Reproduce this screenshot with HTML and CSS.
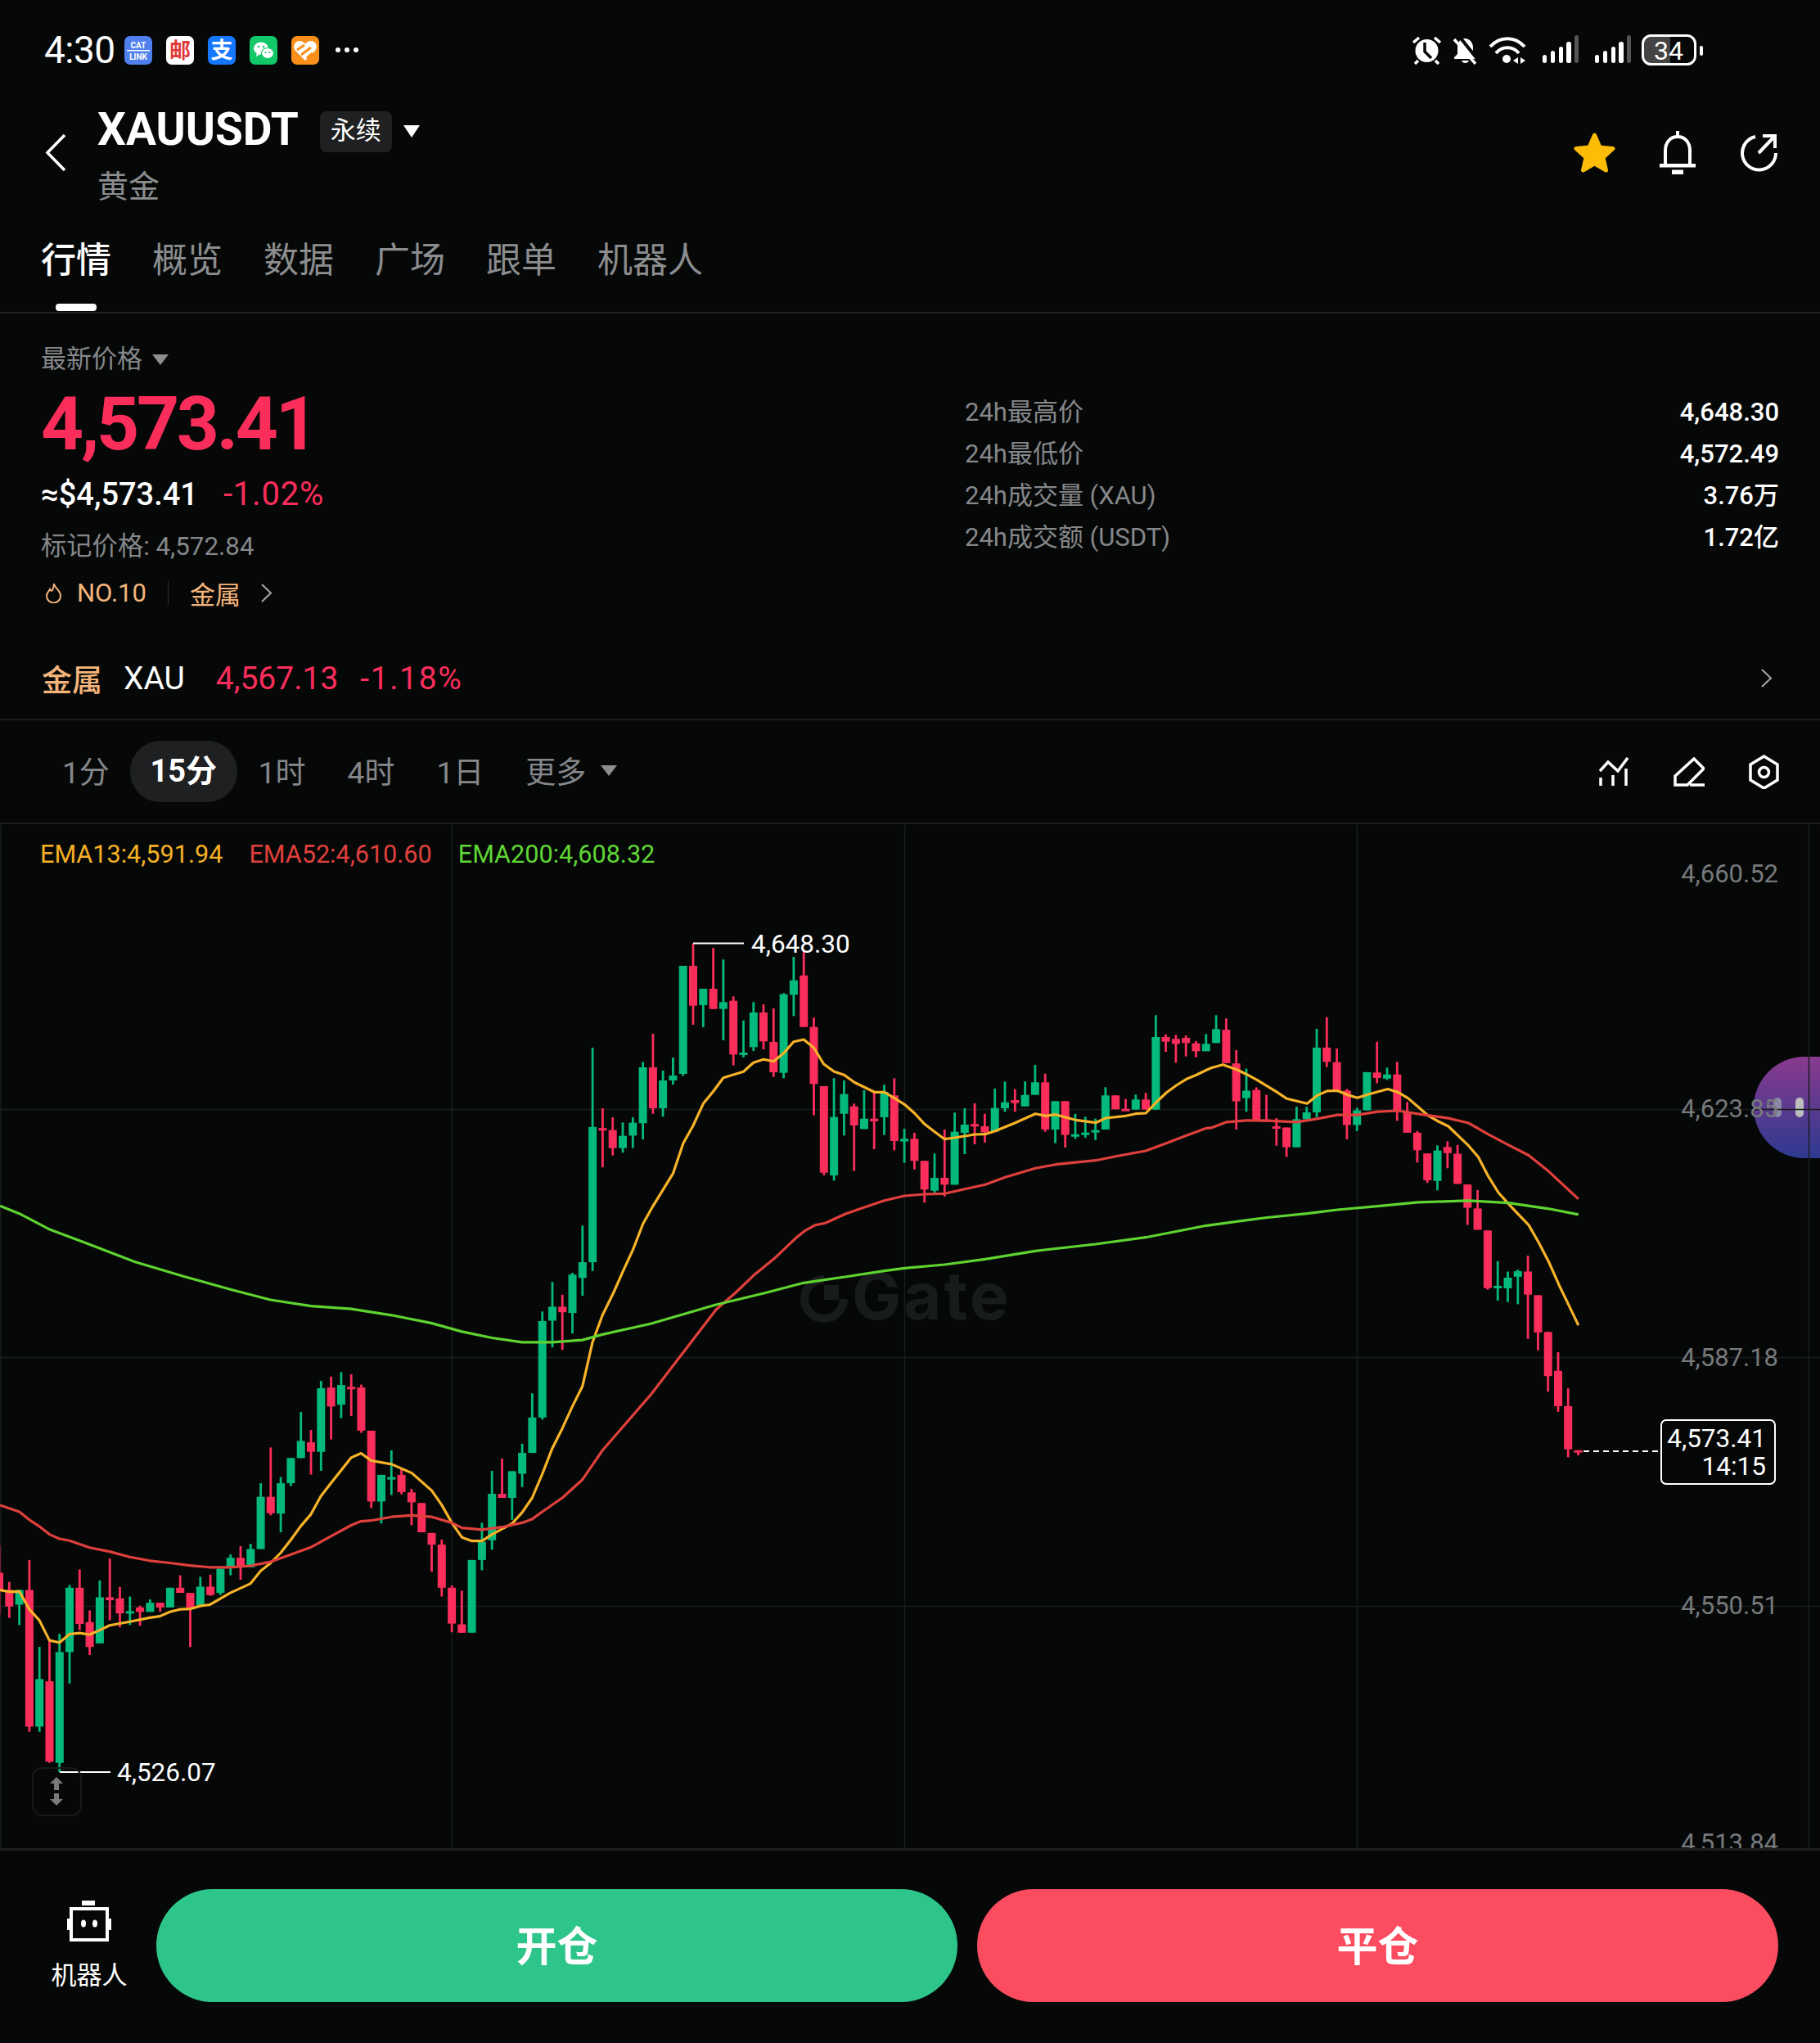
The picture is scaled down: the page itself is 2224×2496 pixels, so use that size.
FILE: index.html
```html
<!DOCTYPE html>
<html>
<head>
    <meta charset="utf-8">
    <title>XAUUSDT</title>
    <link rel="stylesheet" href="styles.css">
</head>
<body>
<div class="app">
    <div class="status-bar">
        <span class="clock">4:30</span>
        <div class="app-icons">
            <svg class="app-icon" viewBox="0 0 34 35"><rect width="34" height="35" rx="7" fill="#5080ee"/><text x="17" y="15" class="cat-text">CAT</text><rect x="3" y="17" width="28" height="1.5" fill="#fff"/><text x="17" y="29" class="cat-text">LINK</text></svg>
            <svg class="app-icon" viewBox="0 0 34 35"><rect width="34" height="35" rx="7" fill="#fff"/><text x="17" y="27" class="mail-text">邮</text></svg>
            <svg class="app-icon" viewBox="0 0 34 35"><rect width="34" height="35" rx="7" fill="#1677ff"/><text x="17" y="27" class="pay-text">支</text></svg>
            <svg class="app-icon" viewBox="0 0 34 35"><rect width="34" height="35" rx="7" fill="#12c868"/><ellipse cx="14" cy="15" rx="9" ry="7.5" fill="#fff"/><path d="M9 20l-1 5 5-3z" fill="#fff"/><ellipse cx="22" cy="21" rx="7.5" ry="6.5" fill="#fff" stroke="#12c868" stroke-width="1.2"/><circle cx="11" cy="13" r="1.3" fill="#12c868"/><circle cx="17" cy="13" r="1.3" fill="#12c868"/><circle cx="19.5" cy="20" r="1.1" fill="#12c868"/><circle cx="24.5" cy="20" r="1.1" fill="#12c868"/></svg>
            <svg class="app-icon" viewBox="0 0 34 35"><rect width="34" height="35" rx="7" fill="#fb8f1b"/><path d="M17 30L5 18C1 13 4 6 10 6c3 0 5 1 7 4 2-3 4-4 7-4 6 0 9 7 5 12z" fill="#fff"/><path d="M7 17l9-6M12 23l12-9M19 27l7-6" stroke="#fb8f1b" stroke-width="3" fill="none"/></svg>
            <svg class="more-dots" viewBox="0 0 28 8"><circle cx="3" cy="4" r="3"/><circle cx="14" cy="4" r="3"/><circle cx="25" cy="4" r="3"/></svg>
        </div>
        <div class="status-right">
            <svg class="st-alarm" viewBox="0 0 37 36"><circle cx="18.5" cy="19" r="14" fill="#fff"/><path d="M16 9v11l8 8" stroke="#060808" stroke-width="3.5" fill="none"/><path d="M2 9l7-6M35 9l-7-6M8 31l-4 4M29 31l4 4" stroke="#fff" stroke-width="3.5" fill="none"/></svg>
            <svg class="st-mute" viewBox="0 0 31 36"><path d="M15 4C9 4 6 9 6 15v8l-4 4v2h27v-2l-4-4v-8C25 9 21 4 15 4z" fill="#fff"/><path d="M11 31h9c-1 4-8 4-9 0z" fill="#fff"/><path d="M7 0l24 30" stroke="#060808" stroke-width="4"/><path d="M2 5l26 30" stroke="#fff" stroke-width="3.5"/></svg>
            <svg class="st-wifi" viewBox="0 0 46 36"><path d="M2 14C14 1 32 1 44 14M9 22C16 13 30 13 37 22" stroke="#fff" stroke-width="4" fill="none"/><circle cx="22" cy="29" r="5" fill="#fff"/><path d="M36 27v8l-6-4zM39 27v8l6-4z" fill="#fff"/></svg>
            <svg class="st-signal" viewBox="0 0 44 36"><rect x="0" y="24" width="5" height="10" rx="2.5"/><rect x="10" y="19" width="5" height="15" rx="2.5"/><rect x="20" y="14" width="5" height="20" rx="2.5"/><rect x="29" y="8" width="6" height="26" rx="2.5"/><rect class="dim" x="39" y="0" width="5" height="34" rx="2.5"/></svg>
            <svg class="st-signal" viewBox="0 0 44 36"><rect x="0" y="24" width="5" height="10" rx="2.5"/><rect x="10" y="19" width="5" height="15" rx="2.5"/><rect x="20" y="14" width="5" height="20" rx="2.5"/><rect x="29" y="8" width="6" height="26" rx="2.5"/><rect class="dim" x="39" y="0" width="5" height="34" rx="2.5"/></svg>
            <svg class="st-battery" viewBox="0 0 76 38"><path d="M11 3h24v32H11a8 8 0 0 1-8-8V11a8 8 0 0 1 8-8z" fill="#444"/><rect x="1.5" y="1.5" width="64" height="35" rx="10" fill="none" stroke="#fff" stroke-width="3"/><rect x="71" y="14" width="4" height="12" rx="2" fill="#fff"/><text x="33" y="31" class="batt-text">34</text></svg>
        </div>
    </div>

    <div class="topbar">
        <svg class="back-icon" viewBox="0 0 26 47"><path d="M24 2L3 23.5 24 45" fill="none" stroke="#fff" stroke-width="3.5"/></svg>
        <div class="title-block">
            <div class="title-row">
                <span class="symbol">XAUUSDT</span>
                <span class="badge">永续</span>
                <span class="caret caret-title"></span>
            </div>
            <div class="subtitle">黄金</div>
        </div>
        <div class="top-actions">
            <svg class="ic-star" viewBox="0 0 53 50"><path d="M26.5 4l6.5 15 16 1.5-12 11 3.500 15.500-14-8.200-14 8.200 3.500-15.500-12-11 16-1.500z" fill="#fcbc07" stroke="#fcbc07" stroke-width="5" stroke-linejoin="round"/></svg>
            <svg class="ic-bell" viewBox="0 0 44 53"><path d="M22 0v7M7 41V24C7 14 13 7 22 7s15 7 15 17v17" fill="none" stroke="#fff" stroke-width="4"/><rect y="40" width="44" height="4.500" fill="#fff"/><rect x="15" y="47.500" width="14" height="5.500" fill="#fff"/></svg>
            <svg class="ic-share" viewBox="0 0 47 47"><path d="M20 4a20.500 20.500 0 1 0 25 20" fill="none" stroke="#fff" stroke-width="4"/><path d="M24 24L43 4M29 3h15v15" fill="none" stroke="#fff" stroke-width="4"/></svg>
        </div>
    </div>

    <div class="tabs">
        <span class="tab active">行情</span>
        <span class="tab">概览</span>
        <span class="tab">数据</span>
        <span class="tab">广场</span>
        <span class="tab">跟单</span>
        <span class="tab">机器人</span>
    </div>

    <div class="overview">
        <div class="price-col">
            <div class="price-label">最新价格 <span class="caret caret-grey"></span></div>
            <div class="price-main">4,573.41</div>
            <div class="price-sub"><span>≈$4,573.41</span><span class="red">-1.02%</span></div>
            <div class="price-mark">标记价格: 4,572.84</div>
            <div class="price-tags">
                <svg class="ic-flame" viewBox="0 0 21 25"><path d="M11 1c0 5 8 8 8 15a8.500 8.500 0 0 1-17 0c0-4 3-6 4-8 1 2 2 2 3 1 1-3 2-5 2-8z" fill="none" stroke="#f5b57a" stroke-width="2"/></svg>
                <span class="tag-no">NO.10</span>
                <span class="tag-sep"></span>
                <span>金属</span>
                <svg class="ic-more" viewBox="0 0 15 23"><path d="M2 1l11 10.500L2 22" fill="none" stroke="#a8a8a8" stroke-width="2"/></svg>
            </div>
        </div>
        <div class="stats">
            <div class="stat-row"><span>24h最高价</span><b>4,648.30</b></div>
            <div class="stat-row"><span>24h最低价</span><b>4,572.49</b></div>
            <div class="stat-row"><span>24h成交量 (XAU)</span><b>3.76万</b></div>
            <div class="stat-row"><span>24h成交额 (USDT)</span><b>1.72亿</b></div>
        </div>
    </div>

    <div class="index-row">
        <span class="index-name">金属</span>
        <span class="index-code">XAU</span>
        <span class="red index-price">4,567.13</span>
        <span class="red index-change">-1.18%</span>
        <svg class="ic-more index-more" viewBox="0 0 15 23"><path d="M2 1l11 10.500L2 22" fill="none" stroke="#a8a8a8" stroke-width="2"/></svg>
    </div>

    <div class="periods">
        <span class="period first">1分</span>
        <span class="period active">15分</span>
        <span class="period">1时</span>
        <span class="period">4时</span>
        <span class="period">1日</span>
        <span class="period more">更多 <span class="caret caret-more"></span></span>
        <div class="chart-tools">
            <svg class="ic-ind" viewBox="0 0 37 36"><path d="M1 17l10-11 12 11L35 1M2 25v10M17 22v13M33 14v21" fill="none" stroke="#fff" stroke-width="3.500"/></svg>
            <svg class="ic-pen" viewBox="0 0 38 36"><path d="M2 34V23L25 2l12 12-20 20zM20 34h18" fill="none" stroke="#fff" stroke-width="3.500"/></svg>
            <svg class="ic-hex" viewBox="0 0 37 42"><path d="M18.500 2L35 12v19L18.500 41 2 31V12z" fill="none" stroke="#fff" stroke-width="3.500"/><circle cx="18.500" cy="21.500" r="6" fill="none" stroke="#fff" stroke-width="3.500"/></svg>
        </div>
    </div>

    <div class="chart">
        <div class="float-ball"><i></i><i></i></div>
        <svg class="chart-svg" viewBox="0 1007 2224 1251">
            <path class="grid" d="M1 1006v1252M552.500 1006v1252M1105.500 1006v1252M1658.500 1006v1252M2210.500 1006v1252M0 1355.500h2224M0 1658.500h2224M0 1962.500h2224"/>
            <g class="watermark">
                <path d="M1007 1563a24 24 0 1 0 24 24" fill="none" stroke="#181b1c" stroke-width="10"/>
                <rect x="1007" y="1570" width="18" height="18" fill="#181b1c"/>
                <text x="1041" y="1612">Gate</text>
            </g>
            <g id="candles"></g>
            <g id="lines"></g>
            <text class="axis" x="2173" y="1078">4,660.52</text>
            <text class="axis" x="2173" y="1365">4,623.85</text>
            <text class="axis" x="2173" y="1669">4,587.18</text>
            <text class="axis" x="2173" y="1972">4,550.51</text>
            <text class="axis" x="2173" y="2262">4,513.84</text>
            <path class="mark-line" d="M847 1152.500h62M73 2165h62"/>
            <text class="mark" x="918" y="1164">4,648.30</text>
            <text class="mark" x="143" y="2176">4,526.07</text>
            <path class="last-line" d="M1935 1773h94"/>
            <rect class="last-box" x="2030" y="1735" width="139" height="78" rx="6"/>
            <text class="last-text" x="2158" y="1768">4,573.41</text>
            <text class="last-text" x="2158" y="1802">14:15</text>
            <rect class="scroll-btn" x="40" y="2160" width="59" height="58" rx="12"/>
            <path class="scroll-arrow" d="M69 2171l-8 8h5v8h6v-8h5zM69 2206l-8-8h5v-7h6v7h5z"/>
        </svg>
        <div class="legend">
            <span class="ema13">EMA13:4,591.94</span>
            <span class="ema52">EMA52:4,610.60</span>
            <span class="ema200">EMA200:4,608.32</span>
        </div>
    </div>

    <div class="bottom-bar">
        <div class="bot-link">
            <svg class="ic-robot" viewBox="0 0 54 50"><rect x="18" y="0" width="16" height="6" fill="#fff"/><rect x="5" y="10" width="44" height="38" fill="none" stroke="#fff" stroke-width="4"/><rect x="0" y="22" width="4" height="14" fill="#fff"/><rect x="50" y="22" width="4" height="14" fill="#fff"/><ellipse cx="20" cy="28" rx="3" ry="4.500" fill="#fff"/><ellipse cx="34" cy="28" rx="3" ry="4.500" fill="#fff"/></svg>
            <span>机器人</span>
        </div>
        <button class="trade open">开仓</button>
        <button class="trade close">平仓</button>
    </div>
</div>
<script src="chart.js"></script>
</body>
</html>
```

FILE: styles.css
```css
* {
    box-sizing: border-box;
}
body {
    margin: 0;
    background-color: #060808;
    color: #fff;
    font-family: Roboto, "Noto Sans CJK SC", sans-serif;
}
svg {
    display: block;
    flex: none;
}
.app {
    width: 2224px;
    height: 2496px;
    display: flex;
    flex-direction: column;
    overflow: hidden;
}
.red {
    color: #fb2d5b;
}

/* status bar */
.status-bar {
    height: 122px;
    padding: 0 142px 0 54px;
    display: flex;
    align-items: center;
}
.clock {
    font-size: 46px;
    letter-spacing: -0.5px;
    width: 98px;
}
.app-icons {
    display: flex;
    align-items: center;
    gap: 17px;
}
.app-icon {
    width: 34px;
    height: 35px;
}
.more-dots {
    width: 28px;
    height: 8px;
    fill: #fff;
    margin-left: 3px;
}
.cat-text {
    font-size: 10px;
    font-weight: 700;
    fill: #fff;
    text-anchor: middle;
}
.mail-text {
    font-size: 26px;
    font-weight: 700;
    fill: #e03a3a;
    text-anchor: middle;
}
.pay-text {
    font-size: 27px;
    font-weight: 700;
    fill: #fff;
    text-anchor: middle;
}
.status-right {
    margin-left: auto;
    display: flex;
    align-items: center;
    gap: 13px;
}
.st-alarm {
    width: 37px;
    height: 36px;
}
.st-mute {
    width: 31px;
    height: 36px;
}
.st-wifi {
    width: 46px;
    height: 36px;
}
.st-signal {
    width: 44px;
    height: 36px;
    fill: #fff;
    margin-left: 7px;
}
.st-signal .dim {
    fill: #555;
}
.st-battery {
    width: 76px;
    height: 38px;
}
.batt-text {
    font-size: 32px;
    fill: #fff;
    text-anchor: middle;
}

/* header */
.topbar {
    height: 134px;
    padding: 0 52px 0 55px;
    display: flex;
    align-items: center;
}
.back-icon {
    width: 26px;
    height: 47px;
    margin: 0 38px 6px 0;
}
.title-block {
    padding-top: 4px;
}
.title-row {
    display: flex;
    align-items: center;
    height: 50px;
}
.symbol {
    font-size: 55px;
    font-weight: 700;
    margin: -6px 26px 0 0;
}
.badge {
    width: 88px;
    height: 50px;
    line-height: 48px;
    text-align: center;
    border-radius: 8px;
    background-color: #1e2021;
    font-size: 31px;
    margin-right: 14px;
}
.caret {
    display: inline-block;
    width: 0;
    height: 0;
    border-style: solid;
    border-color: #fff transparent transparent;
}
.caret-title {
    border-width: 15px 10.5px 0;
}
.subtitle {
    margin-top: 23px;
    font-size: 38px;
    line-height: 38px;
    color: #8b8d8f;
}
.top-actions {
    margin: 0 0 6px auto;
    display: flex;
    align-items: center;
    gap: 53px;
}
.ic-star {
    width: 53px;
    height: 50px;
}
.ic-bell {
    width: 44px;
    height: 53px;
}
.ic-share {
    width: 47px;
    height: 47px;
}

/* tabs */
.tabs {
    height: 127px;
    padding: 37px 0 0 50px;
    display: flex;
    gap: 50px;
    border-bottom: 2px solid #1c1e1f;
}
.tab {
    position: relative;
    font-size: 43px;
    line-height: 50px;
    height: 50px;
    color: #8b8d8f;
}
.tab.active {
    color: #fff;
    font-weight: 500;
}
.tab.active::after {
    content: "";
    position: absolute;
    left: 18px;
    top: 78px;
    width: 50px;
    height: 9px;
    border-radius: 4px;
    background-color: #fff;
}

/* price overview */
.overview {
    height: 390px;
    display: flex;
}
.price-col {
    width: 1179px;
    padding: 36px 0 0 50px;
}
.price-label {
    height: 40px;
    line-height: 40px;
    font-size: 31px;
    color: #85878a;
    display: flex;
    align-items: center;
}
.caret-grey {
    border-width: 13px 10px 0;
    border-top-color: #8b8d8f;
    margin-left: 12px;
}
.price-main {
    height: 110px;
    line-height: 112px;
    margin-top: 3px;
    font-size: 91px;
    font-weight: 700;
    letter-spacing: -3.3px;
    color: #fb2d5b;
}
.price-sub {
    height: 56px;
    line-height: 64px;
    font-size: 38px;
    font-weight: 500;
    display: flex;
    gap: 31px;
}
.price-sub .red {
    font-size: 40px;
    font-weight: 400;
    letter-spacing: 0.8px;
}
.price-mark {
    height: 40px;
    line-height: 40px;
    margin-top: 20px;
    font-size: 31.3px;
    color: #85878a;
}
.price-tags {
    height: 40px;
    margin-top: 16px;
    display: flex;
    align-items: center;
    font-size: 31px;
    color: #f5b57a;
}
.ic-flame {
    width: 21px;
    height: 25px;
    margin: 0 18px 0 5px;
}
.tag-sep {
    width: 1px;
    height: 30px;
    background-color: #2a2c2d;
    margin: 0 26px;
}
.ic-more {
    width: 15px;
    height: 23px;
    margin-left: 24px;
}
.stats {
    flex: 1;
    padding: 95px 50px 0 0;
}
.stat-row {
    height: 51px;
    line-height: 51px;
    display: flex;
    justify-content: space-between;
    font-size: 31px;
    color: #85878a;
}
.stat-row b {
    font-weight: 500;
    color: #fff;
}

/* index row */
.index-row {
    height: 107px;
    padding: 6px 58px 0 51px;
    display: flex;
    align-items: center;
    font-size: 39px;
    border-bottom: 2px solid #1c1e1f;
}
.index-name {
    font-size: 37px;
    font-weight: 500;
    color: #f5b57a;
    margin-right: 26px;
}
.index-price {
    margin: 0 27px 0 38px;
}
.index-change {
    letter-spacing: 1.6px;
}
.index-more {
    margin-left: auto;
}

/* period selector */
.periods {
    height: 127px;
    padding: 0 50px 0 0;
    display: flex;
    align-items: center;
    font-size: 37px;
    color: #85878a;
    border-bottom: 2px solid #1c1e1f;
}
.period {
    margin-left: 51px;
    padding-bottom: 3px;
    white-space: nowrap;
}
.period.first {
    margin-left: 76px;
}
.period.active {
    width: 131px;
    height: 75px;
    margin-left: 25px;
    margin-right: -25px;
    padding-bottom: 0;
    line-height: 75px;
    text-align: center;
    border-radius: 37px;
    background-color: #1e2021;
    color: #fff;
    font-size: 38px;
    font-weight: 700;
}
.period.more {
    display: flex;
    align-items: center;
}
.caret-more {
    border-width: 13px 10px 0;
    border-top-color: #8b8d8f;
    margin-left: 18px;
}
.chart-tools {
    margin-left: auto;
    display: flex;
    align-items: center;
    gap: 54px;
}
.ic-ind {
    width: 37px;
    height: 36px;
}
.ic-pen {
    width: 38px;
    height: 36px;
}
.ic-hex {
    width: 37px;
    height: 42px;
}

/* chart */
.chart {
    position: relative;
    flex: 1;
    overflow: hidden;
}
.chart-svg {
    position: absolute;
    left: 0;
    top: 0;
    width: 2224px;
    height: 1251px;
}
.grid {
    fill: none;
    stroke: #1a1c1d;
    stroke-width: 1.500;
}
.watermark text {
    font-family: Inter, Roboto, sans-serif;
    font-size: 80px;
    font-weight: 700;
    fill: #181b1c;
    letter-spacing: 3px;
}
.axis {
    font-size: 31px;
    fill: #77797b;
    text-anchor: end;
}
.mark {
    font-size: 31.5px;
    fill: #fff;
}
.mark-line {
    fill: none;
    stroke: #fff;
    stroke-width: 2;
}
.last-line {
    fill: none;
    stroke: #fff;
    stroke-width: 2;
    stroke-dasharray: 7 5;
}
.last-box {
    fill: #060808;
    stroke: #fff;
    stroke-width: 2;
}
.last-text {
    font-size: 31.5px;
    fill: #fff;
    text-anchor: end;
}
.scroll-btn {
    fill: none;
    stroke: #17191a;
    stroke-width: 2;
}
.scroll-arrow {
    fill: #77797b;
}
.legend {
    position: absolute;
    left: 49px;
    top: 19px;
    display: flex;
    gap: 32px;
    font-size: 30.6px;
    line-height: 36px;
}
.ema13 {
    color: #f5b025;
}
.ema52 {
    color: #e0403c;
}
.ema200 {
    color: #5fd635;
}
.float-ball {
    position: absolute;
    right: 0;
    top: 284px;
    width: 81px;
    height: 124px;
    border-radius: 62px 0 0 62px;
    background: linear-gradient(#8a3a8e, #2d3a90);
    display: flex;
    align-items: center;
    gap: 17px;
    padding: 0 0 0 24px;
}
.float-ball i {
    width: 10px;
    height: 24px;
    border-radius: 5px;
    background-color: #bdbdbd;
}
.float-ball i:first-child {
    background-color: #8d88a6;
}

/* bottom actions */
.bottom-bar {
    height: 238px;
    padding: 47px 51px 0 62px;
    display: flex;
    border-top: 3px solid #1c1e1f;
}
.bot-link {
    width: 94px;
    margin-right: 35px;
    padding-top: 14px;
    display: flex;
    flex-direction: column;
    align-items: center;
    font-size: 31px;
    white-space: nowrap;
}
.ic-robot {
    width: 54px;
    height: 50px;
    margin-bottom: 16px;
}
.trade {
    height: 138px;
    width: 979px;
    padding: 0 0 6px;
    border: none;
    border-radius: 69px;
    color: #fff;
    font-family: inherit;
    font-size: 50px;
    font-weight: 700;
}
.trade.open {
    background-color: #2dc58a;
    margin-right: 24px;
}
.trade.close {
    background-color: #fc4c60;
}
```

FILE: chart.js
```js
// candles and moving averages, y values traced from three views of the chart
var views = {
    left: { ox: 0, oy: 1580, sx: 2.119, sy: 2.24 },
    top: { ox: 0, oy: 1080, sx: 2.119, sy: 3 },
    mid: { ox: 740, oy: 1080, sx: 2.119, sy: 3 },
    right: { ox: 1480, oy: 1200, sx: 2.108, sy: 2.529 },
    page: { ox: 0, oy: 0, sx: 1, sy: 1 }
};

// color, wick top, body top, body bottom, wick bottom
var candleSets = [
    { view: views.left, start: -1, data: "r690,765,815,880 r790,812,857,888 g812,812,852,908 r730,812,1186,1200 g968,1056,1186,1200 r950,1062,1282,1285 g932,982,1285,1310 g798,806,982,1068 r756,806,905,922 r868,900,968,990 g786,832,958,958 r726,832,840,895 r804,835,876,914 g830,870,875,908 r855,860,872,910 g838,847,872,872 r847,847,860,872 g806,806,860,860 r772,806,820,820 r820,820,860,968 g776,803,855,855 r770,803,826,828 g754,754,820,826 g715,724,748,772 r692,724,748,784 g686,700,750,750 g520,557,700,700 r422,557,602,608 g503,520,603,654 g451,451,520,528 g325,404,451,451 r374,408,434,496 g240,260,434,486 r228,258,310,400 g216,251,305,342 r222,256,259,336 r250,258,376,382 r376,376,570,588 g497,497,570,630 g430,503,506,552 r480,497,544,550 r535,545,572,635 r574,574,654,654 r656,656,688,762 r674,688,806,830 r800,806,904,928 r814,906,929,929 g730,730,929,929 g628,680,730,758 g486,549,676,702 r452,549,560,560 g487,487,560,620 g412,437,494,530 g274,340,437,437 g50,76,340,346 g-31,37,75,148 r4,37,52,155 g-56,-51,54,110 g-185,-85,-42,7 g-672,-455,-85,-61 r-506,-452,-448,-345" },
    { view: views.mid, start: 60, data: "r855,902,968,995 g874,923,968,985 g855,875,922,968 g652,672,877,936 r549,672,822,842 g684,720,822,853 g636,702,720,735 g300,300,696,703 r218,300,446,516 g384,384,444,525 r235,384,458,458 g277,433,458,573 r412,428,625,665 g500,618,623,635 g433,471,598,612 r441,471,577,606 r456,579,690,707 g400,404,692,712 g267,353,406,484 r248,335,524,524 r490,524,733,848 r741,741,1058,1068 g712,854,1068,1087 g720,770,842,922 r805,815,885,1052 g756,860,898,898 r760,860,870,972 g736,762,855,920 r712,775,942,976 g897,934,944,1022 r912,934,1015,1046 r1015,1015,1120,1168 g988,1077,1124,1134 r900,1077,1102,1145 g838,908,1102,1102 g822,882,912,990 r804,880,885,954 r842,888,910,948 g750,821,908,908 g724,800,822,835 r752,792,803,835 g724,773,815,815 g663,727,773,773 r695,727,900,908 g796,796,900,950 r796,796,920,966 g842,917,923,934 g853,911,918,930 g860,902,908,938 g745,775,900,900 r775,775,826,826 r788,824,830,830 g772,790,827,827 r766,790,827,827 g481,561,827,827 r551,561,578,615 r553,568,586,655 r555,564,583,632 r576,584,613,635 g550,586,613,613" },
    { view: views.right, start: 120, data: "g102,145,188,188 r112,147,250,250 r210,251,368,455 g267,335,358,400 r325,333,428,428 r348,424,428,428 r420,445,449,505 r449,449,510,540 g385,423,510,510 g385,402,423,428 g144,202,402,418 r108,202,246,262 r205,247,335,335 r330,335,441,485 g388,396,441,460 g278,278,396,396 r184,279,296,312 g264,285,298,302 r246,285,398,428 r370,400,465,465 r460,465,519,557 r529,529,612,620 g504,520,614,643 r492,509,528,575 r503,530,623,623 r625,625,697,750 r642,699,765,765 r767,767,945,950 g862,938,942,984 g894,913,946,988 g888,893,910,995 r845,894,965,1102 r967,967,1082,1137 r1079,1081,1217,1265 r1143,1201,1310,1327 r1255,1310,1443,1468 r1446,1446,1449,1462" }
];

var lines = [
    {
        color: "#f7b328",
        parts: [
            { view: views.left, pts: "0,812 24,817 50,816 76,865 102,895 128,950 154,956 180,933 206,930 232,934 258,922 284,909 336,899 388,888 414,884 440,872 466,865 492,864 518,856 544,852 596,820 648,795 675,760 701,738 727,710 753,675 779,637 805,605 831,555 857,520 883,485 909,450 935,438 961,458 1014,468 1066,492 1118,540 1144,580 1170,628 1196,668 1222,678 1248,678 1274,660 1326,630 1352,600 1378,560 1404,495 1430,425 1456,370 1482,310 1508,255 1534,135 1560,60" },
            { view: views.mid, pts: "20,1500 45,1420 71,1340 97,1245 123,1180 149,1120 175,1060 201,950 227,885 253,805 279,760 305,710 357,688 383,655 409,643 435,650 461,620 487,578 513,570 539,600 565,660 592,688 618,700 644,727 696,763 722,763 748,785 774,808 800,840 826,880 852,908 878,935 904,930 956,918 983,917 1009,905 1061,875 1113,842 1139,850 1165,845 1217,865 1269,875 1295,858 1347,850 1373,842 1399,840 1426,800 1452,765 1478,738 1504,715 1530,700 1556,682" },
            { view: views.right, pts: "0,265 30,255 66,270 92,285 118,302 170,340 195,360 247,375 273,350 299,336 325,335 351,348 377,357 403,347 455,330 481,340 507,358 533,385 559,412 585,430 611,445 637,475 663,505 688,540 714,600 740,650 766,685 792,718 818,750 844,805 870,865 896,935 922,1000 946,1060" }
        ]
    },
    {
        color: "#e0403c",
        parts: [
            { view: views.left, pts: "0,580 50,598 76,620 102,638 128,660 154,672 180,677 232,696 284,707 336,722 388,732 440,738 492,745 544,750 596,750 648,746 701,735 753,715 805,695 857,665 909,635 935,624 961,622 1014,612 1066,608 1118,612 1170,628 1196,642 1248,647 1300,640 1352,628 1378,618 1404,598 1456,560 1508,510 1560,430" },
            { view: views.page, pts: "796,1703 875,1600" },
            { view: views.mid, pts: "335,1500 387,1430 439,1370 491,1300 517,1270 543,1250 569,1243 620,1210 670,1185 722,1160 774,1143 826,1137 878,1135 930,1118 983,1102 1035,1075 1113,1042 1165,1028 1269,1013 1321,998 1399,978 1452,950 1504,922 1556,895" },
            { view: views.right, pts: "0,450 40,432 92,427 144,428 221,432 273,422 325,410 377,410 429,400 481,397 533,407 611,420 663,435 714,470 766,503 818,535 870,585 946,670" }
        ]
    },
    {
        color: "#5fd32f",
        parts: [
            { view: views.top, pts: "0,1180 50,1208 130,1267 230,1320 350,1385 480,1440 600,1487" },
            { view: views.left, pts: "700,18 805,35 909,43 1014,60 1118,82 1196,105 1274,122 1352,134 1430,134 1508,128 1560,113" },
            { view: views.page, pts: "796,1617 875,1594" },
            { view: views.mid, pts: "410,1500 513,1462 620,1440 722,1418 774,1408 878,1395 983,1375 1113,1345 1269,1320 1399,1295 1556,1252" },
            { view: views.right, pts: "0,750 144,727 247,715 325,703 429,692 533,680 663,675 766,682 870,700 946,718" }
        ]
    }
];

function realY(view, y) {
    return view.oy + y / view.sy;
}

function drawCandles() {
    var html = "";
    candleSets.forEach(function (set) {
        set.data.split(" ").forEach(function (item, n) {
            var x = 11.3 + 12.29 * (set.start + n);
            var color = item[0] === "g" ? "#03b97c" : "#fb2d5b";
            var v = item.slice(1).split(",").map(function (y) { return realY(set.view, +y); });
            var bodyH = Math.max(v[2] - v[1], 3);
            html += '<rect x="' + (x - 1.4).toFixed(1) + '" y="' + v[0].toFixed(1) + '" width="2.8" height="' + (v[3] - v[0]).toFixed(1) + '" fill="' + color + '"/>';
            html += '<rect x="' + (x - 5).toFixed(1) + '" y="' + v[1].toFixed(1) + '" width="10" height="' + bodyH.toFixed(1) + '" fill="' + color + '"/>';
        });
    });
    document.getElementById("candles").innerHTML = html;
}

function drawLines() {
    var html = "";
    lines.forEach(function (line) {
        var pts = [];
        line.parts.forEach(function (part) {
            part.pts.split(" ").forEach(function (p) {
                var xy = p.split(",");
                pts.push((part.view.ox + xy[0] / part.view.sx).toFixed(1) + "," + realY(part.view, +xy[1]).toFixed(1));
            });
        });
        html += '<polyline points="' + pts.join(" ") + '" fill="none" stroke="' + line.color + '" stroke-width="3.2" stroke-linejoin="round"/>';
    });
    document.getElementById("lines").innerHTML = html;
}

drawCandles();
drawLines();
```
